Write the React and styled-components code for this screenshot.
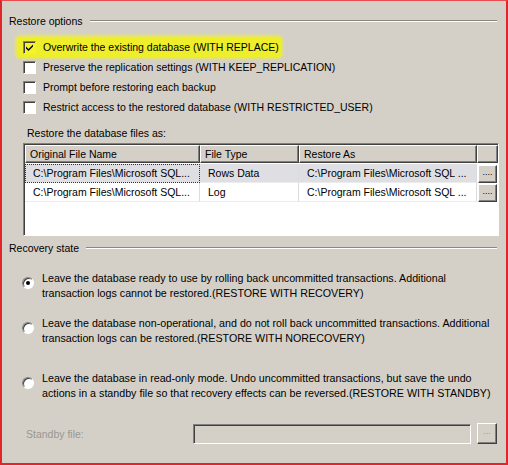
import React from 'react'
import styled, { createGlobalStyle, css } from 'styled-components'

const Global = createGlobalStyle`
  * { box-sizing: border-box; }
  html, body { margin: 0; padding: 0; background: #d4d0c8; }
  body {
    font-family: "Liberation Sans", Arial, sans-serif;
    font-size: 10.5px;
    color: #000;
  }
`

const options = [
  { label: 'Overwrite the existing database (WITH REPLACE)', checked: true, marked: true },
  { label: 'Preserve the replication settings (WITH KEEP_REPLICATION)' },
  { label: 'Prompt before restoring each backup' },
  { label: 'Restrict access to the restored database (WITH RESTRICTED_USER)' },
]

const files = [
  { name: 'C:\\Program Files\\Microsoft SQL...', type: 'Rows Data', as: 'C:\\Program Files\\Microsoft SQL ...', selected: true },
  { name: 'C:\\Program Files\\Microsoft SQL...', type: 'Log', as: 'C:\\Program Files\\Microsoft SQL ...' },
]

const recovery = [
  {
    lines: ['Leave the database ready to use by rolling back uncommitted transactions. Additional', 'transaction logs cannot be restored.(RESTORE WITH RECOVERY)'],
    checked: true,
    gap: 0,
  },
  {
    lines: ['Leave the database non-operational, and do not roll back uncommitted transactions. Additional', 'transaction logs can be restored.(RESTORE WITH NORECOVERY)'],
    gap: 15,
  },
  {
    lines: ['Leave the database in read-only mode. Undo uncommitted transactions, but save the undo', 'actions in a standby file so that recovery effects can be reversed.(RESTORE WITH STANDBY)'],
    gap: 25,
  },
]

const App = () => {
  return (
    <>
      <Global />
      <Frame>
        <GroupTitle>
          <span>Restore options</span>
          <Etch />
        </GroupTitle>

        <CheckList>
          {options.map((o) => (
            <CheckRow key={o.label}>
              {o.marked && <Marker />}
              <CheckBox marked={o.marked}>
                {o.checked && (
                  <svg width="9" height="9" viewBox="0 0 9 9">
                    <path d="M1 3.5 L3.5 6 L8 1.5 L8 3.5 L3.5 8 L1 5.5 Z" fill="#000" />
                  </svg>
                )}
              </CheckBox>
              <span>{o.label}</span>
            </CheckRow>
          ))}
        </CheckList>

        <SubLabel>Restore the database files as:</SubLabel>

        <Grid>
          <GridRow>
            <HeadCell w={175}>Original File Name</HeadCell>
            <HeadCell w={99}>File Type</HeadCell>
            <HeadCell w={178}>Restore As</HeadCell>
            <HeadCell w={21} />
          </GridRow>
          {files.map((f, i) => (
            <GridRow key={i}>
              <Cell w={175} selected={f.selected} focus={f.selected}>{f.name}</Cell>
              <Cell w={99} selected={f.selected}>{f.type}</Cell>
              <Cell w={178} selected={f.selected}>{f.as}</Cell>
              <BtnCell>
                <DotButton>....</DotButton>
              </BtnCell>
            </GridRow>
          ))}
        </Grid>

        <GroupTitle top={4}>
          <span>Recovery state</span>
          <Etch />
        </GroupTitle>

        <RadioList>
          {recovery.map((r, i) => (
            <RadioRow key={i} gap={r.gap}>
              <Radio checked={r.checked} />
              <RadioText>
                {r.lines.map((l) => (
                  <div key={l}>{l}</div>
                ))}
              </RadioText>
            </RadioRow>
          ))}
        </RadioList>

        <StandbyRow>
          <Disabled>Standby file:</Disabled>
          <Field />
          <SmallButton>...</SmallButton>
        </StandbyRow>
      </Frame>
    </>
  )
}

const Frame = styled.div`
  width: 508px;
  height: 465px;
  border: 2px solid #e0262b;
  border-top: 1px solid #e84a4e;
  background: #d4d0c8;
  padding: 12px 9px 0 7px;
  display: flex;
  flex-direction: column;
  overflow: hidden;
`

const GroupTitle = styled.div`
  display: flex;
  align-items: center;
  height: 15px;
  margin-top: ${(p) => p.top || 0}px;
  span {
    white-space: nowrap;
    padding-right: 7px;
  }
`

const Etch = styled.div`
  flex: 1;
  height: 2px;
  border-top: 1px solid #8a8780;
  border-bottom: 1px solid #fff;
`

const CheckList = styled.div`
  display: flex;
  flex-direction: column;
  margin-top: 9px;
  padding-left: 14px;
`

const CheckRow = styled.div`
  position: relative;
  display: flex;
  align-items: center;
  gap: 7px;
  height: 20px;
  span { position: relative; white-space: nowrap; }
`

const Marker = styled.div`
  position: absolute;
  left: -6px;
  top: 0;
  width: 264px;
  height: 20px;
  background: #eeee2a;
  box-shadow: 0 0 3px 2px rgba(238, 238, 60, 0.75);
  border-radius: 3px;
`

const CheckBox = styled.div`
  position: relative;
  width: 13px;
  height: 13px;
  background: ${(p) => (p.marked ? '#f4f428' : '#fff')};
  border-top: 1px solid #808080;
  border-left: 1px solid #808080;
  border-right: 1px solid ${(p) => (p.marked ? '#f4f428' : '#fff')};
  border-bottom: 1px solid ${(p) => (p.marked ? '#f4f428' : '#fff')};
  box-shadow: inset 1px 1px 0 #404040;
  display: flex;
  align-items: center;
  justify-content: center;
  flex-shrink: 0;
`

const SubLabel = styled.div`
  margin-top: 9px;
  padding-left: 18px;
  height: 15px;
  line-height: 15px;
`

const Grid = styled.div`
  margin: 2px 0 0 14px;
  width: 476px;
  height: 93px;
  background: #fff;
  border-top: 1px solid #808080;
  border-left: 1px solid #808080;
  border-right: 1px solid #fff;
  border-bottom: 1px solid #fff;
  box-shadow: inset 1px 1px 0 #404040;
  padding: 1px 0 0 1px;
`

const GridRow = styled.div`
  display: flex;
  height: 19px;
`

const HeadCell = styled.div`
  width: ${(p) => p.w}px;
  height: 18px;
  flex-shrink: 0;
  background: #d4d0c8;
  border-top: 1px solid #fff;
  border-left: 1px solid #fff;
  border-right: 1px solid #404040;
  border-bottom: 1px solid #404040;
  box-shadow: inset -1px -1px 0 #808080;
  padding: 0 0 0 4px;
  line-height: 16px;
  white-space: nowrap;
`

const Cell = styled.div`
  width: ${(p) => p.w}px;
  flex-shrink: 0;
  height: 19px;
  line-height: 18px;
  padding-left: 8px;
  white-space: nowrap;
  overflow: hidden;
  border-right: 1px solid #dcdcdc;
  border-bottom: 1px solid #ececec;
  background: ${(p) => (p.selected ? '#dfdfe3' : '#fff')};
  ${(p) =>
    p.focus &&
    css`
      outline: 1px dotted #333;
      outline-offset: -1px;
    `}
`

const BtnCell = styled.div`
  width: 21px;
  height: 19px;
  display: flex;
  align-items: center;
  justify-content: center;
  background: #fff;
`

const DotButton = styled.div`
  width: 19px;
  height: 18px;
  background: #d4d0c8;
  border-top: 1px solid #fff;
  border-left: 1px solid #fff;
  border-right: 1px solid #404040;
  border-bottom: 1px solid #404040;
  box-shadow: inset -1px -1px 0 #808080;
  font-size: 9px;
  line-height: 12px;
  text-align: center;
  color: #000;
`

const RadioList = styled.div`
  display: flex;
  flex-direction: column;
  margin-top: 16px;
  padding-left: 13px;
  font-size: 10.7px;
`

const RadioRow = styled.div`
  display: flex;
  align-items: center;
  gap: 8px;
  margin-top: ${(p) => p.gap}px;
`

const Radio = styled.div`
  position: relative;
  width: 12px;
  height: 12px;
  border-radius: 50%;
  flex-shrink: 0;
  background: #fff;
  border: 1px solid;
  border-color: #808080 #fff #fff #808080;
  box-shadow: inset 1px 1px 0 #404040;
  margin-top: -6px;
  &::after {
    content: '';
    display: ${(p) => (p.checked ? 'block' : 'none')};
    position: absolute;
    left: 3px;
    top: 3px;
    width: 4px;
    height: 4px;
    border-radius: 50%;
    background: #000;
  }
`

const RadioText = styled.div`
  line-height: 15px;
  white-space: nowrap;
`

const StandbyRow = styled.div`
  display: flex;
  align-items: center;
  margin-top: 22px;
  padding-left: 17px;
`

const Disabled = styled.div`
  width: 168px;
  color: #9a9791;
`

const Field = styled.div`
  width: 279px;
  height: 20px;
  border-top: 1px solid #808080;
  border-left: 1px solid #808080;
  border-right: 1px solid #fff;
  border-bottom: 1px solid #fff;
  box-shadow: inset 1px 1px 0 #404040;
  background: #d4d0c8;
`

const SmallButton = styled.div`
  margin-left: 6px;
  width: 20px;
  height: 21px;
  background: #d4d0c8;
  border-top: 1px solid #fff;
  border-left: 1px solid #fff;
  border-right: 1px solid #404040;
  border-bottom: 1px solid #404040;
  box-shadow: inset -1px -1px 0 #808080;
  color: #9a9791;
  font-size: 9px;
  text-align: center;
  line-height: 14px;
`

export default App
